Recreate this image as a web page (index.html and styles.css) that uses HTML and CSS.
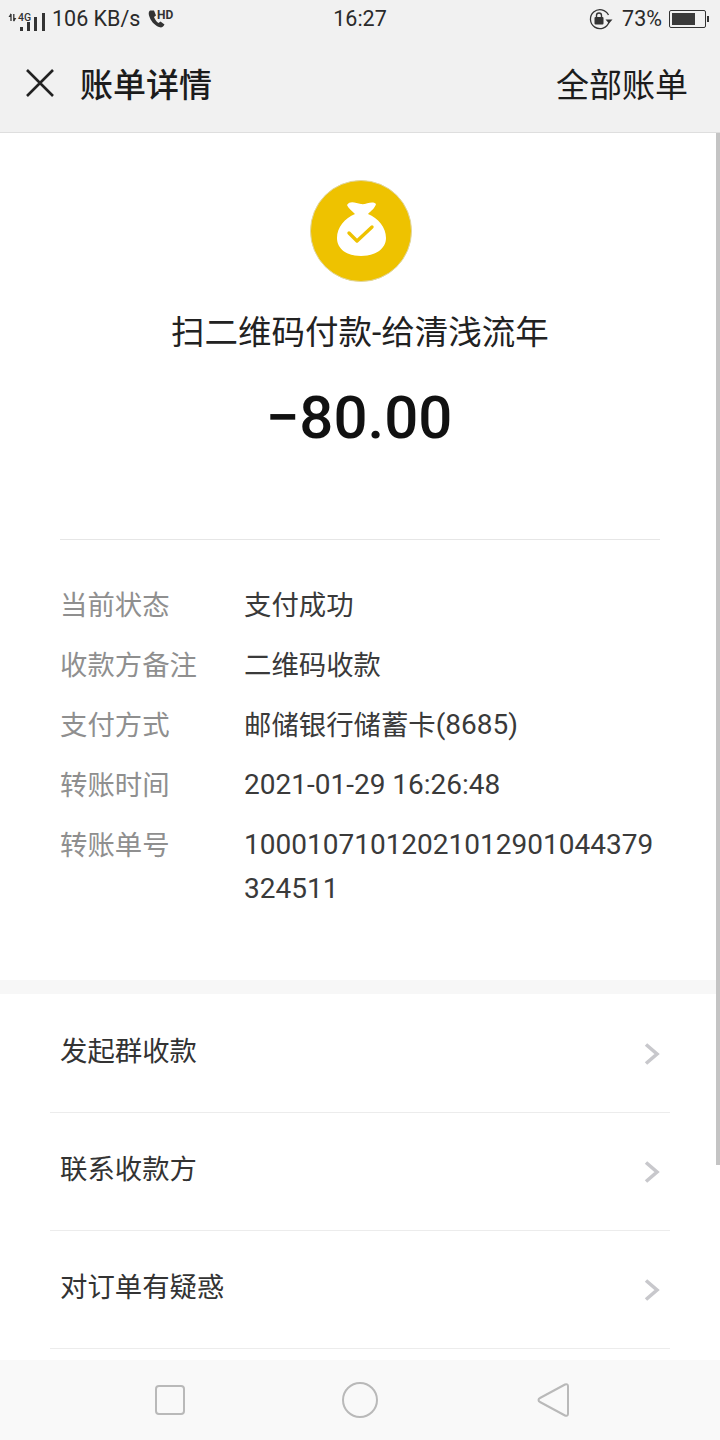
FILE: index.html
```html
<!DOCTYPE html>
<html lang="zh-CN">
<head>
<meta charset="utf-8">
<title>账单详情</title>
<link rel="stylesheet" href="styles.css">
</head>
<body>
<div class="phone">
  <header class="top">
    <div class="status">
      <div class="status-left">
        <svg class="sig" width="46" height="28" viewBox="0 0 46 28">
          <path d="M11 10v7M13.800 10v7" stroke="#333" stroke-width="1.300" fill="none"/>
          <path d="M11 9l-2.500 4H11zM13.800 18l2.500-4h-2.500z" fill="#333"/>
          <text x="18" y="17" class="sig-t">4G</text>
          <rect x="20" y="23" width="3" height="4" fill="#333"/>
          <rect x="27" y="18" width="3" height="9" fill="#333"/>
          <rect x="34" y="13" width="3" height="14" fill="#333"/>
          <rect x="42" y="9" width="3" height="18" fill="#333"/>
        </svg>
        <span class="speed">106 KB/s</span>
        <svg class="call" width="28" height="24" viewBox="0 0 28 24">
          <path d="M3 3.500c-1.500 1-1.500 3-1 5 1.500 5 5 9.500 10 11.500 2 .7 3.500 .5 4.500-1l1-1.500-4-3-2 1.500c-2-1.200-3.500-3.500-4.500-6l2-1.500-2-5z" fill="#333"/>
          <text x="10" y="12" class="hd">HD</text>
        </svg>
      </div>
      <span class="clock">16:27</span>
      <div class="status-right">
        <svg class="lock" width="26" height="24" viewBox="0 0 26 24">
          <path d="M20.500 8a9.500 9.500 0 1 0 .5 7" fill="none" stroke="#333" stroke-width="1.300"/>
          <path d="M17.500 12.500h7l-3.500 4z" fill="#333"/>
          <rect x="6.500" y="10" width="9" height="7.500" rx="1" fill="#333"/>
          <path d="M8.500 10V8.500a2.500 2.500 0 0 1 5 0V10" fill="none" stroke="#333" stroke-width="1.400"/>
        </svg>
        <span class="pct">73%</span>
        <div class="battery"><div class="battery-fill"></div></div>
        <div class="battery-tip"></div>
      </div>
    </div>
    <div class="nav">
      <svg class="close" width="30" height="30" viewBox="0 0 30 30">
        <path d="M2 2l26 26M28 2L2 28" stroke="#222" stroke-width="2.600" fill="none"/>
      </svg>
      <h1 class="title">账单详情</h1>
      <span class="all">全部账单</span>
    </div>
  </header>

  <main class="content">
    <div class="scrollbar"></div>
    <section class="summary">
      <svg class="logo" width="102" height="102" viewBox="0 0 102 102">
        <circle cx="51" cy="51" r="50.500" fill="#eec200" stroke="#e0d6a0" stroke-width="1"/>
        <path d="M37 25C40 20 46 23 51 24C56 25 62 20 66 24C65 28 61 31 58 34C68 38 76 47 76 58C76 69 65 76 51 76C37 76 27 69 27 58C27 47 35 38 45 34C42 31 38 28 37 25z" fill="#fff"/>
        <path d="M39 53l8 8 15-14" fill="none" stroke="#eec200" stroke-width="3.400" stroke-linecap="round" stroke-linejoin="round"/>
      </svg>
      <div class="payee">扫二维码付款-给清浅流年</div>
      <div class="amount">−80.00</div>
    </section>

    <dl class="details">
      <div class="row"><dt>当前状态</dt><dd>支付成功</dd></div>
      <div class="row"><dt>收款方备注</dt><dd>二维码收款</dd></div>
      <div class="row"><dt>支付方式</dt><dd>邮储银行储蓄卡<span class="num">(8685)</span></dd></div>
      <div class="row"><dt>转账时间</dt><dd><span class="num">2021-01-29 16:26:48</span></dd></div>
      <div class="row"><dt>转账单号</dt><dd><span class="num">10001071012021012901044379324511</span></dd></div>
    </dl>

    <div class="band"></div>

    <ul class="actions">
      <li class="action"><span>发起群收款</span><svg class="chev" width="16" height="24" viewBox="0 0 16 24"><path d="M2 2.500l11 9.500-11 9.500" fill="none" stroke="#c8c8cc" stroke-width="3.600"/></svg></li>
      <li class="action"><span>联系收款方</span><svg class="chev" width="16" height="24" viewBox="0 0 16 24"><path d="M2 2.500l11 9.500-11 9.500" fill="none" stroke="#c8c8cc" stroke-width="3.600"/></svg></li>
      <li class="action"><span>对订单有疑惑</span><svg class="chev" width="16" height="24" viewBox="0 0 16 24"><path d="M2 2.500l11 9.500-11 9.500" fill="none" stroke="#c8c8cc" stroke-width="3.600"/></svg></li>
    </ul>
  </main>

  <footer class="sysbar">
    <svg class="nav-square" width="32" height="32" viewBox="0 0 32 32"><rect x="2" y="2" width="28" height="28" rx="3" fill="none" stroke="#b9b9b9" stroke-width="2"/></svg>
    <svg class="nav-circle" width="38" height="38" viewBox="0 0 38 38"><circle cx="19" cy="19" r="17" fill="none" stroke="#b9b9b9" stroke-width="2"/></svg>
    <svg class="nav-back" width="34" height="36" viewBox="0 0 34 36"><path d="M28 2.500c1.500-.8 3-.2 3 1.500v28c0 1.700-1.500 2.300-3 1.500L3 20c-2-1-2-3 0-4z" fill="none" stroke="#b9b9b9" stroke-width="2"/></svg>
  </footer>
</div>
</body>
</html>
```
FILE: styles.css
```css
* { box-sizing: border-box; }
html, body { margin: 0; padding: 0; }
body {
  font-family: Roboto, "Noto Sans CJK SC", sans-serif;
  background: #fff;
  color: #333;
}
.phone {
  width: 720px;
  height: 1440px;
  display: flex;
  flex-direction: column;
  overflow: hidden;
}
.top {
  height: 133px;
  flex: none;
  background: #f1f1f1;
  border-bottom: 1px solid #dedede;
}
.status {
  height: 37px;
  padding: 0 11px 0 0;
  display: grid;
  grid-template-columns: 1fr auto 1fr;
  align-items: center;
  font-size: 21.500px;
  color: #2a2a2a;
}
.status-left { display: flex; align-items: center; }
.sig { flex: none; margin-top: -1px; }
.sig-t { font: 500 10.500px Roboto, sans-serif; fill: #333; }
.hd { font: 700 12px Roboto, sans-serif; fill: #333; }
.speed { white-space: nowrap; margin-left: 6px; }
.call { flex: none; margin-left: 7px; }
.clock { text-align: center; padding-left: 11px; }
.status-right {
  display: flex;
  align-items: center;
  justify-content: flex-end;
}
.pct { margin-left: 8px; margin-right: 7px; }
.battery {
  width: 37px;
  height: 18px;
  border: 1px solid #333;
  border-radius: 2px;
  padding: 2px;
}
.battery-fill { width: 73%; height: 100%; background: #3a3a3a; }
.battery-tip { width: 2px; height: 6px; background: #333; margin-left: 1px; }
.nav {
  height: 95px;
  padding: 0 32px 4px 25px;
  display: flex;
  align-items: center;
}
.close { flex: none; }
.title {
  margin: 0 0 0 25px;
  font-size: 33px;
  font-weight: 500;
  color: #1c1c1c;
  flex: 1;
}
.all { font-size: 33px; color: #1c1c1c; }
.content {
  flex: 1;
  min-height: 0;
  overflow: hidden;
  position: relative;
}
.scrollbar {
  position: absolute;
  top: 0;
  right: 0;
  width: 4px;
  height: 1032px;
  background: #c4c4c4;
}
.summary {
  margin: 0 60px;
  height: 407px;
  padding-top: 47px;
  padding-left: 2px;
  display: flex;
  flex-direction: column;
  align-items: center;
  border-bottom: 1px solid #e6e6e6;
}
.payee {
  margin-top: 27px;
  margin-left: -2px;
  font-size: 33.500px;
  line-height: 48px;
  color: #222;
  white-space: nowrap;
}
.amount {
  margin-top: 25px;
  margin-left: -4px;
  font-size: 60px;
  line-height: 72px;
  font-weight: 500;
  color: #111;
}
.details {
  margin: 0;
  height: 440px;
  padding: 44px 60px 0 60px;
}
.row {
  display: flex;
  min-height: 60px;
  font-size: 27.400px;
  line-height: 44px;
}
.row dt { width: 184px; flex: none; color: #8f8f8f; }
.row dd { margin: 0; flex: 1; min-width: 0; color: #3a3a3a; word-break: break-all; }
.num { font-size: 28px; line-height: 1; vertical-align: 1px; }
.band { height: 14px; background: #f7f7f7; }
.actions { list-style: none; margin: 0 50px; padding: 0; }
.action {
  height: 118px;
  padding: 0 9px 10px 10px;
  display: flex;
  align-items: center;
  justify-content: space-between;
  font-size: 27.400px;
  color: #333;
  border-bottom: 1px solid #ececec;
}
.action:first-child { height: 119px; padding-bottom: 9px; }
.chev { margin-top: 11px; margin-right: 1px; }
.sysbar {
  height: 80px;
  flex: none;
  background: #f9f9f9;
  display: flex;
  align-items: center;
  justify-content: space-between;
  padding: 0 149px 0 154px;
}
.nav-circle { margin-left: -3px; }
```
